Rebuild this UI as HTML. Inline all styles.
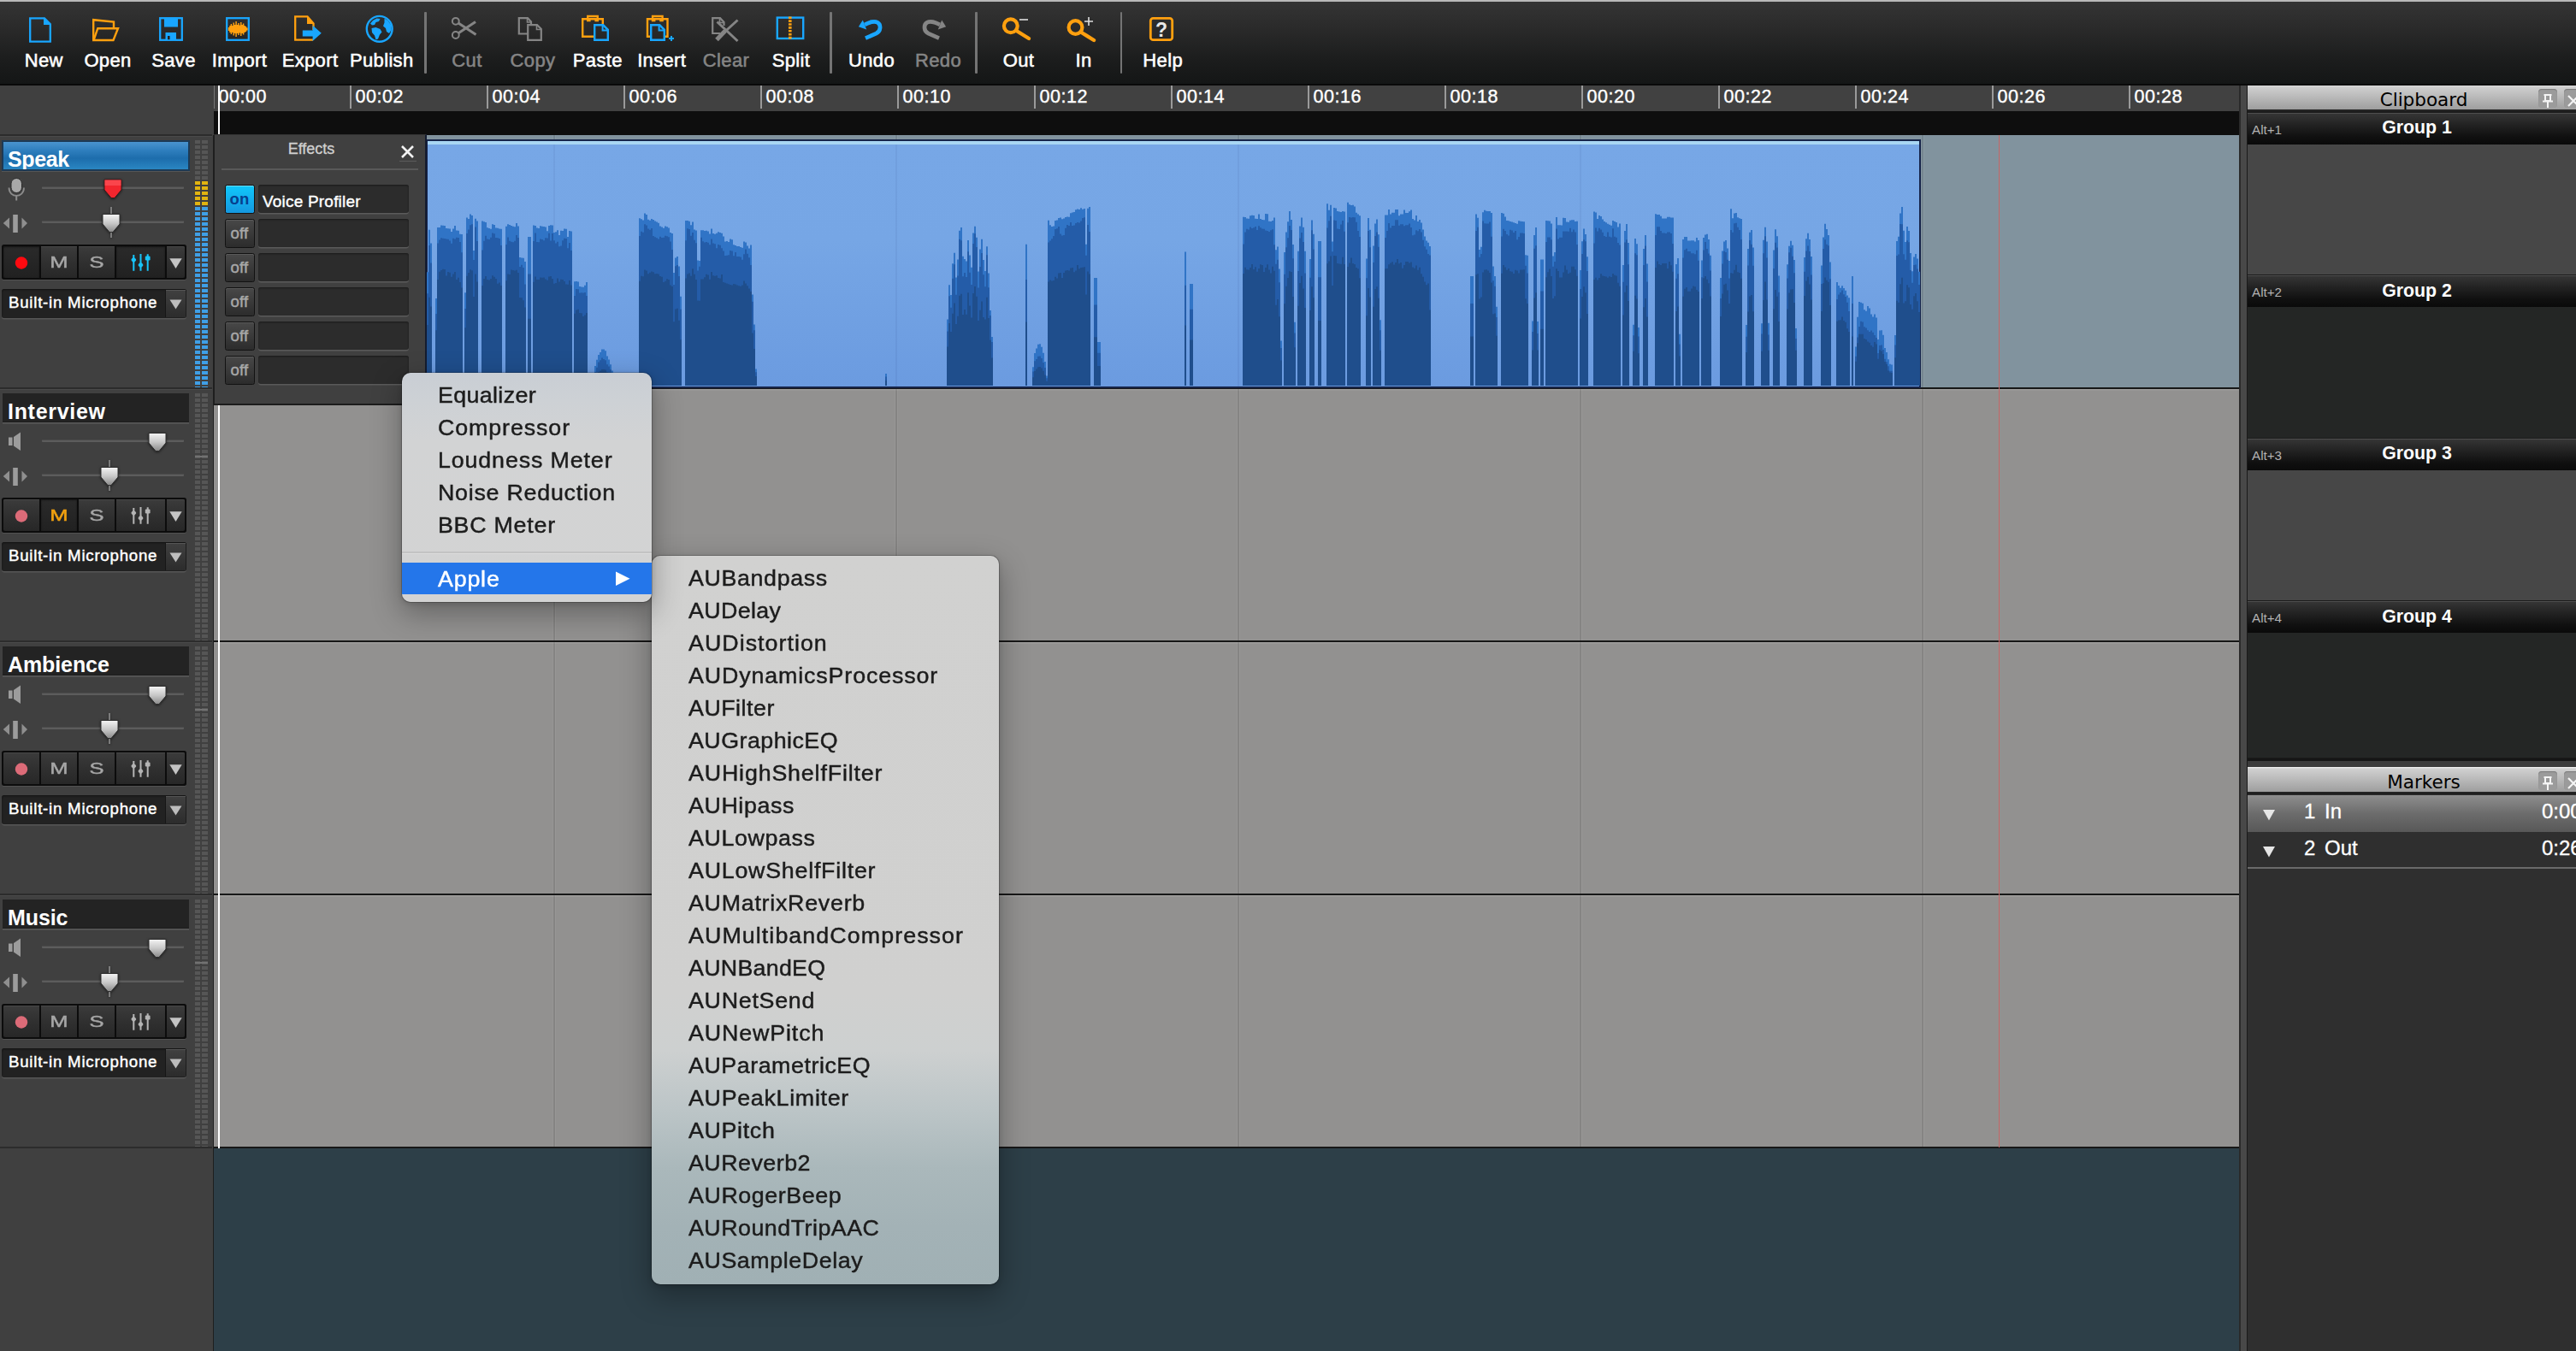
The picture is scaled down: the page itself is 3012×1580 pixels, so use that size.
<!DOCTYPE html><html><head><meta charset="utf-8"><title>Audio Editor</title><style>
*{box-sizing:border-box;margin:0;padding:0}
html,body{width:3012px;height:1580px;overflow:hidden;background:#404040}
body{position:relative;font-family:"Liberation Sans",sans-serif;color:#fff}
.abs{position:absolute}
#topstrip{left:0;top:0;width:3012px;height:2px;background:#b9b9b9}
#toolbar{left:0;top:2px;width:3012px;height:98px;background:linear-gradient(#343434 0%,#2b2b2b 30%,#1c1d1d 70%,#141616 100%);border-bottom:2px solid #090909}
.tsep{position:absolute;top:12px;width:2.2px;height:72px;background:#747474;border-radius:1px;margin-left:.4px}
.tlabel{position:absolute;top:54.5px;height:28px;line-height:28px;font-size:22px;white-space:nowrap;transform:translateX(-50%);color:#fff;-webkit-text-stroke:0.55px #fff;letter-spacing:0.35px}
.tlabel.dis{color:#858585;-webkit-text-stroke:0.55px #858585}
.ticon{position:absolute;top:14px;width:40px;height:40px;overflow:visible}
#ruler{left:250px;top:100px;width:2368px;height:30px;background:#414141}
.tick{position:absolute;top:0;width:2px;height:27px;background:#9a9a9a}
.tlab{position:absolute;top:0.3px;height:26px;line-height:26px;font-size:21.5px;color:#fff;-webkit-text-stroke:0.4px #fff;letter-spacing:0.55px}
#band{left:250px;top:130px;width:2368px;height:28px;background:#0e0e0e}
#lanes{left:250px;top:158px;width:2368px;height:1186px;background:#929190;overflow:hidden}
.lane{position:absolute;left:0;width:2368px;height:296px}
.lsep{position:absolute;left:0;width:2368px;height:2px;background:#171717;box-shadow:0 1.5px 0 rgba(255,255,255,.12)}
.grid{position:absolute;top:0;width:2px;height:1184px;background:rgba(0,0,0,.085);box-shadow:1px 0 0 rgba(255,255,255,.06),-1px 0 0 rgba(255,255,255,.04)}
#teal{left:250px;top:1343px;width:2368px;height:237px;background:#2d3f48}
#playhead{left:255px;top:100px;width:2px;height:1243px;background:#fff}
#redline{left:2336.7px;top:158px;width:1.6px;height:1184px;background:#c56767}
#leftp{left:0;top:100px;width:250px;height:1480px;background:#404040}
#lpb{left:248.6px;top:158px;width:1.8px;height:1422px;background:#1e1e1e}

.track{position:absolute;left:0;width:248px;height:296px;border-top:2px solid #2c2c2c;box-shadow:inset 0 1px 0 #4a4a4a}
.tname{position:absolute;left:3px;top:5px;width:218px;height:34px;background:#232323;border-bottom:1px solid #1c1c1c;box-shadow:0 1.5px 0 #5b5b5b;font-weight:bold;font-size:25px;line-height:42px;padding-left:6px;letter-spacing:.3px;color:#fff;overflow:hidden;white-space:nowrap}
.tname.sel{top:4.5px;height:36px;left:2px;width:220px;border:2px solid #1d3a55;background:linear-gradient(#4a94cf 0%,#2f7fbe 30%,#1d6dac 60%,#2a86c2 100%);box-shadow:0 1px 0 #555;line-height:40px;padding-left:5px}
.meter{position:absolute;left:227.5px;top:4.5px;width:15px;height:290px;
 background:
 linear-gradient(90deg,transparent 0,transparent 6px,#404040 6px,#404040 8.5px,transparent 8.5px) ,
 repeating-linear-gradient(180deg,transparent 0,transparent 4px,#404040 4px,#404040 6px),
 linear-gradient(#565656,#565656)}
.meter.live{background:
 linear-gradient(90deg,transparent 0,transparent 6px,#404040 6px,#404040 8.5px,transparent 8.5px) ,
 repeating-linear-gradient(180deg,transparent 0,transparent 4px,#404040 4px,#404040 6px),
 linear-gradient(#565656 0,#565656 48px,#e2b410 48px,#e2b410 77px,#3f9fe6 77px,#3f9fe6 100%)}
.sline{position:absolute;left:49px;width:166px;height:3px;background:#5c5c5c;border-top:1px solid #4b4b4b;border-radius:1px}
.btnrow{position:absolute;left:2px;top:127px;width:216px;height:41px;background:#0c0c0c;border-radius:2.5px;box-shadow:0 1px 0 #525252}
.btn{position:absolute;top:2px;height:37px;background:linear-gradient(#3b3b3b 0%,#303030 50%,#272727 100%);box-shadow:inset 0 1px 0 #474747}
.btn.act{background:linear-gradient(#2a2a2a,#212121);box-shadow:inset 0 1px 2px #141414}
.btn span{position:absolute;left:0;right:0;top:0;text-align:center;font-size:18.5px;line-height:38px;color:#a6a6a6;-webkit-text-stroke:.45px #a6a6a6;transform:scaleX(1.38)}
.dd{position:absolute;left:2px;top:179px;width:216px;height:34px;background:#222;border-radius:3px;box-shadow:0 1.5px 0 #565656, inset 0 1px 2px #111}
.dd b{position:absolute;left:8px;top:0;font-weight:normal;font-size:18.7px;line-height:32px;color:#fff;-webkit-text-stroke:.45px #fff;white-space:nowrap;letter-spacing:.75px}
.dd i{position:absolute;right:1px;top:1px;width:24px;height:32px;background:linear-gradient(#404040,#2c2c2c);border-left:1px solid #161616;box-shadow:inset 0 1px 0 #555}

#fx{left:250px;top:157px;width:249px;height:317px;background:#404040;border-left:1px solid #1e1e1e;border-right:2px solid #141c30;border-bottom:2px solid #1c1c1c;border-top:1px solid #333}
#fx h4{position:absolute;left:0;width:226px;top:3.8px;text-align:center;font-weight:normal;font-size:18px;line-height:24px;color:#d0d0d0;-webkit-text-stroke:.3px #d0d0d0}
#fx .hr{position:absolute;left:8px;top:39.3px;width:230px;height:2px;background:#595959}
.fxb{position:absolute;left:11.5px;width:35px;height:34px;margin-top:-1.5px;border-radius:2.5px;border:1.5px solid #121212;font-size:18.5px;font-weight:bold;line-height:31px;text-align:center;letter-spacing:.2px}
.fxb.off{background:linear-gradient(#484848,#2c2c2c);color:#a8a8a8;font-weight:normal;-webkit-text-stroke:.45px #a8a8a8;box-shadow:inset 0 1px 0 #5a5a5a}
.fxb.on{background:linear-gradient(#10c8fb,#1598e0);color:#063f8e;box-shadow:inset 0 1px 0 #6fdcff}
.fxn{position:absolute;left:51px;width:176px;height:33px;margin-top:-1.2px;background:#2c2c2c;border-radius:3px;box-shadow:0 1.5px 0 #5a5a5a, inset 0 1px 2px #1a1a1a;font-size:19px;line-height:40.5px;padding-left:5px;color:#fff;-webkit-text-stroke:.4px #fff;white-space:nowrap;letter-spacing:.2px}

#split{left:2618px;top:100px;width:10px;height:1480px;background:linear-gradient(90deg,#2a2a2a 0,#2a2a2a 2px,#484848 2px,#484848 9px,#262626 9px)}
#rp{left:2627px;top:99px;width:385px;height:1481px;background:#1b1b1b;border-left:1px solid #1a1a1a;font-family:"Liberation Sans",sans-serif}
.ptitle{position:absolute;left:0;width:384px;height:31px;background:linear-gradient(#f6f6f6 0,#d0d0d0 7%,#bcbcbc 45%,#9e9e9e 100%);border-bottom:2px solid #242424;color:#000;font-family:"DejaVu Sans","Liberation Sans",sans-serif;font-size:21.5px;line-height:35px;text-align:center;padding-left:28px;overflow:hidden}
.pbtn{position:absolute;top:5px;width:22px;height:22px;border-radius:4px;background:#9b9b9b;box-shadow:inset 0 1px 1px #7a7a7a}
.gh{position:absolute;left:0;width:384px;height:37px;background:linear-gradient(#353535 0%,#232323 35%,#101010 75%,#0a0a0a 100%);border-top:1px solid #4e4e4e}
.gh i{position:absolute;left:5px;top:9px;font-style:normal;font-size:15.2px;line-height:20px;color:#b2b2b2}
.gh b{position:absolute;left:0;width:396px;top:2.6px;text-align:center;font-size:21.3px;line-height:28px;color:#fff}
.gb{position:absolute;left:0;width:384px}
.mrow{position:absolute;left:0;width:384px;height:43px;font-size:24px;line-height:38.5px;color:#fff;-webkit-text-stroke:.3px #fff}
.mrow span{position:absolute;top:0}

.menu{position:absolute;border-radius:10px;box-shadow:0 0 0 1px rgba(0,0,0,.2),0 12px 34px 2px rgba(0,0,0,.3),0 2px 6px rgba(0,0,0,.15);overflow:hidden}
.mi{position:absolute;left:0;right:0;height:38px;line-height:38px;font-size:26px;color:#1c1c1c;white-space:nowrap}
.mi span{position:absolute;top:0;transform-origin:0 50%;transform:scaleX(1.03);-webkit-text-stroke:.45px currentColor}
.mi.hl{background:#2476ea;color:#fff}
</style></head><body><div id="lanes" class="abs"><div class="lane" style="top:0px;background:#81939e;"></div><div class="lane" style="top:296px;"></div><div class="lane" style="top:592px;"></div><div class="lane" style="top:888px;"></div><div class="grid" style="left:396.5px"></div><div class="grid" style="left:796.5px"></div><div class="grid" style="left:1196.5px"></div><div class="grid" style="left:1596.5px"></div><div class="grid" style="left:1996.5px"></div><div class="lsep" style="top:294.8px"></div><div class="lsep" style="top:590.8px"></div><div class="lsep" style="top:886.8px"></div><div class="lsep" style="top:1182.8px"></div></div><div id="teal" class="abs"></div><div class="abs" style="left:498px;top:163px;width:1748px;height:291px;background:#16244a"></div><div class="abs" style="left:500px;top:165px;width:1744px;height:287px;background:linear-gradient(#a9d6f2 0,#a9d6f2 3.5px,#77a7e6 3.5px,#76a6e5 40%,#6b9be0 100%)"></div><div class="abs" style="left:646.5px;top:169px;width:2px;height:283px;background:rgba(20,40,110,.06)"></div><div class="abs" style="left:1046.5px;top:169px;width:2px;height:283px;background:rgba(20,40,110,.06)"></div><div class="abs" style="left:1446.5px;top:169px;width:2px;height:283px;background:rgba(20,40,110,.06)"></div><div class="abs" style="left:1846.5px;top:169px;width:2px;height:283px;background:rgba(20,40,110,.06)"></div><svg class="abs" style="left:0;top:0" width="2300" height="460" viewBox="0 0 2300 460"><path d="M499 451.0V318.3H501V268.7H503V284.6H505V451H507H509V349.1H511V265.9H513V266.1H515V263.5H517V263.7H519V263.9H521V267.1H523V267.3H525V267.5H527V271H529V267.6H531V264.1H533V269.5H535V269.7H537V273.7H539V273.9H541V451H543V342.3H545V254.6H547V256.1H549V250.6H551V252.1H553V293.1H555V255.7H557V258.6H559V451H561H563V258.5H565V259.3H567V260.1H569V266.3H571V267.1H573V267.8H575V262.2H577V262.9H579V266.5H581V266.8H583V267.6H585V267.8H587V451H589H591V264.8H593V262.3H595V262.9H597V264.1H599V264.7H601V265.3H603V260.9H605V264.4H607V300.9H609V301.4H611V301.7H613V306.1H615V451H617V277H619H621V451H623V263.6H625V264H627V266.6H629V267H631V264.3H633V264.7H635V265H637V265.4H639V270.2H641V264.1H643V263.2H645V263.6H647V272.1H649V271.3H651V269.2H653V275.1H655V269.7H657V270.1H659V267.4H661V267.8H663V277H665V270.1H667V270.5H669V451H671V329.3H673V329H675V329.4H677V335H679V335.4H681V335.7H683V333.7H685V330.1H687V451H689H691H693V442.9H695V427.9H697V420.7H699V415.1H701V412H703V408.5H705H707V410.2H709V416.5H711V420.6H713V426.2H715V433.5H717V444.2H719V451H721H723H725H727H729H731H733H735H737H739H741H743H745H747V255.2H749V256.3H751V257.4H753V249.6H755V251H757V256.7H759V257.8H761V256H763V257.1H765V258.5H767V259.6H769V260.8H771V264.4H773V265.5H775V266.7H777V264.6H779V265.2H781V266.4H783V271.9H785V273.1H787V318.9H789V301.4H791V300H793V311.6H795V346.8H797V451H799H801V257.9H803H805V258.7H807V263.3H809V259.4H811V268.6H813V269.4H815V304.4H817V305H819V269.2H821V269.3H823V270.1H825V269.7H827V270.5H829V273.5H831V267.4H833V272.9H835V273.7H837V272.8H839V271.2H841V272H843V272.8H845V276.4H847V282.4H849V282.1H851V282.9H853V279.4H855V280.2H857V286.2H859V287H861V288.1H863H865V288.9H867V289.7H869V282.6H871V283.4H873V287.5H875V290.4H877V286.4H879V344.5H881V379.5H883V431.6H885V451H887H889H891H893H895H897H899H901H903H905H907H909H911H913H915H917H919H921H923H925H927H929H931H933H935H937H939H941H943H945H947H949H951H953H955H957H959H961H963H965H967H969H971H973H975H977H979H981H983H985H987H989H991H993H995H997H999H1001H1003H1005H1007H1009H1011H1013H1015H1017H1019H1021H1023H1025H1027H1029H1031H1033H1035V437H1037V451H1039H1041H1043H1045H1047H1049H1051H1053H1055H1057H1059H1061H1063H1065H1067H1069H1071H1073H1075H1077H1079H1081H1083H1085H1087H1089H1091H1093H1095H1097H1099H1101H1103H1105H1107V373.4H1109V333.2H1111V345.1H1113V308.2H1115V295.7H1117V324.4H1119V303.4H1121V269.8H1123V266H1125V299.7H1127V303.1H1129V305.6H1131V280.9H1133V298.4H1135V312.8H1137V272.6H1139V264.7H1141V277.8H1143V317.6H1145V291.4H1147V279.8H1149V304H1151V317H1153V288.3H1155V319.4H1157V362.9H1159V394H1161V451H1163H1165H1167H1169H1171H1173H1175H1177H1179H1181H1183H1185H1187H1189H1191H1193H1195H1197H1199V285.7H1201V451H1203H1205H1207V429.2H1209V413H1211V407.4H1213V402.7H1215V402.3H1217V405.7H1219V412.7H1221V423.1H1223V439.5H1225V257.8H1227V263.2H1229V265.1H1231V264.4H1233V258.1H1235V257.4H1237V255.1H1239V254.4H1241V256.2H1243V255.5H1245V254.1H1247V253.4H1249V253.7H1251V249.3H1253V248.6H1255V247.9H1257V245.3H1259V244.6H1261V245H1263V243.2H1265V244.7H1267V244H1269V285.7H1271V243.7H1273V242.1H1275V451H1277H1279V325H1281H1283V400H1285H1287V451H1289H1291H1293H1295H1297H1299H1301H1303H1305H1307H1309H1311H1313H1315H1317H1319H1321H1323H1325H1327H1329H1331H1333H1335H1337H1339H1341H1343H1345H1347H1349H1351H1353H1355H1357H1359H1361H1363H1365H1367H1369H1371H1373H1375H1377H1379H1381H1383H1385V294.6H1387V451H1389H1391V332H1393H1395V451H1397H1399H1401H1403H1405H1407H1409H1411H1413H1415H1417H1419H1421H1423H1425H1427H1429H1431H1433H1435H1437H1439H1441H1443H1445H1447H1449H1451H1453V253.7H1455V254H1457V255.4H1459V255.7H1461V252.3H1463V251.8H1465V252.1H1467V255.8H1469V256H1471V250.4H1473V255.9H1475V257H1477V257.3H1479V249.9H1481V250.2H1483V258.8H1485V259.1H1487V258.1H1489V254.4H1491V292.3H1493V288.6H1495V314.5H1497V398.4H1499V451H1501V294.9H1503V271.5H1505V259.2H1507V247.1H1509V257H1511V285.9H1513V376.7H1515V451H1517V293.7H1519V264.6H1521V254.4H1523V265.7H1525V293.7H1527V451H1529H1531V303.1H1533V257.4H1535V273.8H1537V451H1539H1541V282H1543H1545V451H1547H1549H1551V238.2H1553V245.8H1555V239.8H1557V282.5H1559V242.9H1561V243.4H1563V247.1H1565V247.6H1567V248.1H1569V247H1571V247.5H1573V451H1575V236.8H1577V239.3H1579V240H1581V239.8H1583V241.5H1585V248.8H1587V250.5H1589V252.2H1591V451H1593H1595H1597V302.4H1599V255H1601V268.7H1603V451H1605V287.4H1607V261.5H1609V256.6H1611V274.3H1613V374.2H1615V451H1617H1619V251.4H1621H1623V244.9H1625V250.6H1627V248.8H1629H1631V245.1H1633H1635V252.3H1637V250.6H1639H1641V245.4H1643V249H1645H1647V247.2H1649V245.6H1651V256H1653V257.6H1655V251.9H1657V259.1H1659V256.9H1661V260.6H1663V268.5H1665V276.6H1667V281.4H1669V283.7H1671V287.9H1673V451H1675H1677H1679H1681H1683H1685H1687H1689H1691H1693H1695H1697H1699H1701H1703H1705H1707H1709H1711H1713H1715H1717H1719V323H1721H1723V451H1725V250.4H1727V254.8H1729V291.9H1731V288.8H1733V248.3H1735V245.7H1737V246.7H1739V246.9H1741V247H1743V249.1H1745V311.5H1747V323H1749V358.8H1751V451H1753H1755V249.1H1757V249.8H1759V253.6H1761V258H1763V258.3H1765V258.9H1767V259.6H1769V260.3H1771V260.9H1773V261.8H1775V258.2H1777V258.8H1779V258.9H1781V259.3H1783V298.2H1785V298.7H1787V451H1789H1791V375.6H1793V275.1H1795V266.1H1797V376H1799V451H1801V303.6H1803H1805V451H1807V257.9H1809V258.3H1811V258.5H1813V261.4H1815V299.5H1817V295.1H1819V253.9H1821V263.2H1823V263.3H1825V263.5H1827V254.7H1829V254.9H1831V259.6H1833V259.8H1835V257.7H1837V257.2H1839V257.3H1841V259.1H1843V258.8H1845V451H1847V316H1849V282.2H1851V267.4H1853V274H1855V300.2H1857V451H1859H1861H1863V247.5H1865V248.5H1867V256.1H1869V251.9H1871V252.9H1873V256.4H1875V259.1H1877V260.2H1879V261.8H1881V262.8H1883V263.8H1885V258H1887V259H1889V260.1H1891V265.4H1893V261.5H1895V451H1897V310.1H1899V270.1H1901V262H1903V284.1H1905V451H1907H1909V379.8H1911V278.9H1913V285.3H1915V383H1917V451H1919H1921V291.1H1923V275H1925V308.6H1927V451H1929H1931H1933H1935V250.3H1937V251.1H1939H1941V252.7H1943V255.4H1945H1947H1949V253.7H1951H1953V254.4H1955H1957V451H1959V309.1H1961V302.1H1963V390.7H1965V451H1967V279.9H1969V277H1971H1973V281.4H1975H1977V281.2H1979H1981V282.4H1983V278.1H1985V280.9H1987V451H1989V304.4H1991V277.9H1993V274.4H1995V273.7H1997V279.9H1999V298.7H2001V451H2003H2005H2007H2009H2011V325H2013V293.4H2015V282.4H2017V280.9H2019V290.6H2021V304.9H2023V244.3H2025V255.3H2027V249.4H2029V248.9H2031V254.3H2033V255.2H2035V256.1H2037V451H2039H2041V380H2043V290.9H2045V271.8H2047V269H2049V289.5H2051V451H2053H2055H2057H2059V378.2H2061V280.8H2063V265.7H2065V282.4H2067V377.7H2069V451H2071H2073V292.5H2075V268.3H2077V276.2H2079V322.4H2081V451H2083H2085H2087H2089V309.2H2091V287.7H2093V281.8H2095V286.7H2097V304.1H2099V384H2101V451H2103H2105H2107H2109V301.1H2111V279.3H2113V272.8H2115V280H2117V300H2119V451H2121H2123H2125H2127H2129V310.6H2131V277.6H2133V261.8H2135V268H2137V275H2139V306.6H2141V451H2143H2145H2147V330.1H2149V334H2151V336.7H2153V334.2H2155V337H2157V339.8H2159V345.4H2161V348.2H2163V451H2165V323H2167V451H2169V405.5H2171V370.8H2173V353.1H2175V353.8H2177V354.8H2179V362.3H2181V363.8H2183V358.1H2185V360.5H2187V367.5H2189V370.5H2191V367.6H2193V371.5H2195V397.1H2197V386.6H2199V386.2H2201V391.7H2203V407.1H2205V412H2207V420.2H2209V425.7H2211V426.6H2213V451H2215V392H2217V282.1H2219V276.7H2221V249.5H2223V241.9H2225V269.7H2227V283H2229V265.1H2231V269.9H2233V295.9H2235V317.3H2237V300.5H2239V297.1H2241V302.5H2243V317.8H2245V451.0Z" fill="#3074c6"/><path d="M499 451.0V343.2H501V287.1H503V307.4H505V451H507H509V366.9H511V284.4H513V280.5H515V278.2H517V278.7H519V278.9H521V279.6H523V279.8H525V281.6H527V284.8H529V278.8H531V279.4H533V277.8H535V278H537V282.9H539V295.2H541V451H543V360.9H545V273H547V268.5H549V263.3H551V262.2H553V304.1H555V265.4H557V282.1H559V451H561H563V292.5H565V281.8H567V275.7H569V279.4H571V280.1H573V277.8H575V272.4H577V273.2H579V278H581V278.3H583V279H585V287.1H587V451H589H591V285.9H593V277.5H595V281.7H597V282.7H599V283.3H601V281.7H603V274.9H605V278.1H607V311.9H609V309.8H611V313H613V332.4H615V451H617V320.5H619H621V451H623V282.1H625V272.5H627V282.9H629V283.2H631V279.5H633V279.9H635V281.3H637V278.2H639V278.5H641V272.7H643V281.4H645V273.1H647V281.2H649V284.6H651V282.8H653V288.2H655V287.6H657V281.2H659V278.7H661V279.1H663V290.2H665V283.9H667V293.1H669V451H671V345.9H673V337.9H675V338.3H677V342.5H679V342.2H681V342.5H683V342H685V346.1H687V451H689H691H693V445.3H695V434.9H697V429.8H699V423.6H701V421.2H703V418.5H705V420.1H707V421.3H709V426.2H711V428.5H713V432.2H715V438.6H717V446.2H719V451H721H723H725H727H729H731H733H735H737H739H741H743H745H747V276H749V270.8H751V271.8H753V262.3H755V263.6H757V267.6H759V268.7H761V266.9H763V275.9H765V277.2H767V278.2H769V279.6H771V276.8H773V277.9H775V277.7H777V275.7H779V276.3H781V277.3H783V282.5H785V292H787V333H789V311.3H791V310H793V323H795V361.7H797V451H799H801V281.2H803V267.3H805V268H807V275.7H809V272.1H811V280.8H813V284.3H815V316.4H817V311.8H819V277.8H821V282.3H823V283.4H825V283H827V283.8H829V286.3H831V279.5H833V284.6H835V285.3H837V290.3H839V286.1H841V286.8H843V290.2H845V293.5H847V298.9H849V298.7H851V298.2H853V292.9H855V293.6H857V299.2H859V294.9H861V299.9H863H865V300.6H867V303.7H869V297.2H871V291.4H873V296.8H875V301.3H877V310.1H879V352.8H881V386.2H883V435.2H885V451H887H889H891H893H895H897H899H901H903H905H907H909H911H913H915H917H919H921H923H925H927H929H931H933H935H937H939H941H943H945H947H949H951H953H955H957H959H961H963H965H967H969H971H973H975H977H979H981H983H985H987H989H991H993H995H997H999H1001H1003H1005H1007H1009H1011H1013H1015H1017H1019H1021H1023H1025H1027H1029H1031H1033H1035V440.5H1037V451H1039H1041H1043H1045H1047H1049H1051H1053H1055H1057H1059H1061H1063H1065H1067H1069H1071H1073H1075H1077H1079H1081H1083H1085H1087H1089H1091H1093H1095H1097H1099H1101H1103H1105H1107V387.6H1109V346.3H1111V359.8H1113V325.8H1115V309.2H1117V344.7H1119V322.6H1121V279.7H1123V281.3H1125V323.3H1127V319H1129V324.1H1131V294.2H1133V318.8H1135V333H1137V285.1H1139V273.3H1141V289.1H1143V336.4H1145V312.1H1147V295.9H1149V321.2H1151V335.2H1153V298.2H1155V336.2H1157V369.1H1159V400.1H1161V451H1163H1165H1167H1169H1171H1173H1175H1177H1179H1181H1183H1185H1187H1189H1191H1193H1195H1197H1199V327H1201V451H1203H1205H1207V434.5H1209V422.3H1211V420H1213V416.7H1215V416.6H1217V418.9H1219V423.9H1221V430H1223V442.3H1225V283.6H1227V281.5H1229V279.3H1231V275.9H1233V267.9H1235V267.2H1237V265H1239V273.6H1241V275.5H1243V274.9H1245V266.8H1247V263H1249V264.1H1251V259.9H1253V264H1255V263.4H1257V261H1259V260H1261V260.4H1263V258.6H1265V255H1267V254.3H1269V298.7H1271V263H1273V271.1H1275V451H1277H1279V356.5H1281H1283V412.8H1285H1287V451H1289H1291H1293H1295H1297H1299H1301H1303H1305H1307H1309H1311H1313H1315H1317H1319H1321H1323H1325H1327H1329H1331H1333H1335H1337H1339H1341H1343H1345H1347H1349H1351H1353H1355H1357H1359H1361H1363H1365H1367H1369H1371H1373H1375H1377H1379H1381H1383H1385V333.7H1387V451H1389H1391V361.8H1393H1395V451H1397H1399H1401H1403H1405H1407H1409H1411H1413H1415H1417H1419H1421H1423H1425H1427H1429H1431H1433H1435H1437H1439H1441H1443H1445H1447H1449H1451H1453V285.5H1455V271.4H1457V267.8H1459V268.5H1461V265.4H1463V267H1465V266.3H1467V265.1H1469V268.9H1471V264.2H1473V266.2H1475V267.4H1477V267.7H1479V269.6H1481V269.9H1483V271.1H1485V269.2H1487V268.3H1489V286.2H1491V308.7H1493V303.8H1495V330.2H1497V406.9H1499V451H1501V320.7H1503V289.3H1505V278.2H1507V263.9H1509V269H1511V302.3H1513V389.5H1515V451H1517V317H1519V278.4H1521V272H1523V283H1525V319.4H1527V451H1529H1531V324.7H1533V269.2H1535V291.4H1537V451H1539H1541V324.2H1543H1545V451H1547H1549H1551V266.4H1553V258.3H1555V252.7H1557V294.3H1559V257.5H1561V258H1563V267.4H1565V267.9H1567V262.4H1569V257.9H1571V270.7H1573V451H1575V260.3H1577V254H1579V254.6H1581V254H1583V254.2H1585V259.8H1587V270.1H1589V277H1591V451H1593H1595H1597V325.3H1599V270.1H1601V289.2H1603V451H1605V307H1607V275.9H1609V271.4H1611V288.7H1613V386.2H1615V451H1617H1619V278.1H1621V270.1H1623V261.1H1625V266.4H1627V263.9H1629H1631V257.3H1633H1635V263.8H1637V262.2H1639H1641V264.3H1643V263.3H1645H1647V261.6H1649V266H1651V275.3H1653V274.5H1655V269.2H1657V270.3H1659V268.1H1661V271.6H1663V280.7H1665V288.3H1667V291.7H1669V297H1671V298.4H1673V451H1675H1677H1679H1681H1683H1685H1687H1689H1691H1693H1695H1697H1699H1701H1703H1705H1707H1709H1711H1713H1715H1717H1719V355H1721H1723V451H1725V269.9H1727V265.7H1729V300.7H1731V297H1733V258.6H1735V261.2H1737V261.4H1739V261.5H1741V259.4H1743V276.7H1745V328.3H1747V334.7H1749V370.9H1751V451H1753H1755V276.5H1757V267.7H1759V269.9H1761V274H1763V275.5H1765V268.8H1767V269.5H1769V272H1771V269.9H1773V280.3H1775V277H1777V272.5H1779H1781V272.9H1783V310.7H1785V319.6H1787V451H1789H1791V388H1793V290.7H1795V287.3H1797V390H1799V451H1801V340.5H1803H1805V451H1807V283.1H1809V277.4H1811V277.6H1813V280.2H1815V311.7H1817V305.9H1819V267.5H1821V279.6H1823V277.7H1825V277.8H1827V270.5H1829V270.6H1831H1833V270.7H1835V266.8H1837V271.2H1839V268.5H1841V271.6H1843V285.9H1845V451H1847V337.9H1849V297.1H1851V280.3H1853V282.2H1855V317H1857V451H1859H1861H1863V284.5H1865V266.6H1867V270.6H1869V266.7H1871V268.6H1873V271.8H1875V275.9H1877V276.9H1879V271.5H1881V276.7H1883V277.6H1885V267.3H1887V276.8H1889V277.7H1891V283.9H1893V286.4H1895V451H1897V329.7H1899V283.4H1901V280.2H1903V309.3H1905V451H1907H1909V392.3H1911V296.2H1913V298.3H1915V393.5H1917V451H1919H1921V309.9H1923V287.6H1925V329.4H1927V451H1929H1931H1933H1935V275.1H1937V265.3H1939H1941V270H1943V272.4H1945H1947V272.9H1949V271.4H1951H1953V273H1955V285.1H1957V451H1959V325.8H1961V320.2H1963V402.4H1965V451H1967V301.5H1969V292.2H1971V290.7H1973V294.1H1975H1977V296.2H1979H1981V297.3H1983V292.8H1985V304.7H1987V451H1989V324.2H1991V292.4H1993V283H1995V290.9H1997V296.5H1999V316.4H2001V451H2003H2005H2007H2009H2011V348.9H2013V308.4H2015V293.7H2017V294.9H2019V303.8H2021V325.5H2023V269H2025V271.8H2027V261.2H2029V260.7H2031V265.8H2033V269.1H2035V279.9H2037V451H2039H2041V393.8H2043V310.4H2045V280.9H2047V285.7H2049V310.7H2051V451H2053H2055H2057H2059V390.4H2061V296.3H2063V276.3H2065V301.6H2067V391.4H2069V451H2071H2073V313.9H2075V283.7H2077V289.4H2079V341.7H2081V451H2083H2085H2087H2089V325.5H2091V295.3H2093V289.7H2095V299.7H2097V319.3H2099V395.9H2101V451H2103H2105H2107H2109V317.7H2111V293.4H2113V287.5H2115V294H2117V321.4H2119V451H2121H2123H2125H2127H2129V331.9H2131V290.9H2133V280.2H2135V285.8H2137V287.2H2139V326.2H2141V451H2143H2145H2147V350H2149V344.6H2151V341.9H2153V339.6H2155V344.3H2157V346.9H2159V353.7H2161V363.9H2163V451H2165V355H2167V451H2169V416.8H2171V394.4H2173V382H2175V375.8H2177V376.5H2179V382.3H2181V383.4H2183V386.3H2185V388H2187V386.5H2189V388.7H2191V392.1H2193V394.9H2195V413H2197V403.9H2199V403.6H2201V408.9H2203V419.8H2205V423.3H2207V428.2H2209V433.8H2211H2213V451H2215V403.6H2217V299H2219V297.4H2221V262.1H2223V262.2H2225V297.2H2227V303.7H2229V281.2H2231V283.3H2233V316H2235V330.8H2237V309.9H2239V309.6H2241V314.6H2243V332.9H2245V451.0Z" fill="#245ca8"/><path d="M499 451.0V380H501V347.8H503V358.4H505V451H507H509V386.3H511V327.1H513V317.8H515V316H517V314.8H519V315H521V322.4H523V318H525V318.7H527V323.7H529V320.4H531V317.9H533V327.1H535V324.7H537V330H539V336.6H541V451H543V383.2H545V322.7H547V319.1H549V315.2H551V316.3H553V347H555V320.6H557V329.4H559V451H561H563V334H565V325.9H567V323H569V327H571V327.5H573V326.1H575V322.3H577V323.7H579V326.1H581V331.7H583V330.6H585V334.1H587V451H589H591V328.2H593V320.6H595V321.1H597V315.6H599V316H601V316.5H603V315.8H605V319H607V347.9H609V348.2H611V351.2H613V359.5H615V451H617V372.7H619H621V451H623V329.7H625V323.5H627V326.9H629V327.1H631V324.5H633V324.8H635V324.4H637V326.4H639V327.7H641V323.5H643V322.9H645V326H647V331.7H649V331.1H651V325.4H653V329.5H655V326.7H657V327H659V329.1H661V332.4H663V332.7H665V328.1H667V333.5H669V451H671V366.8H673V362.6H675V361.8H677V365.9H679V366.2H681V370H683V368.6H685V366.1H687V451H689H691H693V447.4H695V440.6H697V437.4H699V434.9H701V433.5H703V431.9H705H707V432.6H709V435.5H711V437.3H713V439.8H715V443.1H717V448H719V451H721H723H725H727H729H731H733H735H737H739H741H743H745H747V328.8H749V322.7H751V323.3H753V315.5H755V316.5H757V320.3H759V318.8H761V317.5H763V318.3H765V320.2H767V319.9H769V320.5H771V323H773V323.7H775V330.1H777V328.7H779V326.3H781V327.1H783V333.4H785V335H787V376.2H789V361.6H791V360.7H793V374.8H795V397.2H797V451H799H801V325.5H803V320.4H805V319.6H807V322.7H809V314.3H811V320.8H813V327.1H815V351.4H817V351.8H819V326.4H821H823V324.2H825V320.8H827V321.4H829V326.7H831V318.1H833V322.3H835V322.8H837V322.2H839V325.1H841V325.6H843V321.1H845V330.1H847V330.8H849V331.6H851V332.2H853V332.9H855V333.4H857V332H859V332.6H861V333.4H863V334.2H865V334.7H867V333.6H869V328.5H871V331.4H873V334.3H875V337.5H877V341.1H879V389.4H881V408.1H883V439.9H885V451H887H889H891H893H895H897H899H901H903H905H907H909H911H913H915H917H919H921H923H925H927H929H931H933H935H937H939H941H943H945H947H949H951H953H955H957H959H961H963H965H967H969H971H973H975H977H979H981H983H985H987H989H991H993H995H997H999H1001H1003H1005H1007H1009H1011H1013H1015H1017H1019H1021H1023H1025H1027H1029H1031H1033H1035V444.7H1037V451H1039H1041H1043H1045H1047H1049H1051H1053H1055H1057H1059H1061H1063H1065H1067H1069H1071H1073H1075H1077H1079H1081H1083H1085H1087H1089H1091H1093H1095H1097H1099H1101H1103H1105H1107V405.5H1109V377.9H1111V388H1113V366.8H1115V354.5H1117V378.9H1119V369.8H1121V345.7H1123V343.8H1125V368.1H1127V362.1H1129V367.7H1131V342.3H1133V357.5H1135V371.4H1137V342.9H1139V335H1141V346.7H1143V375.1H1145V362.8H1147V352.5H1149V370.9H1151V373.5H1153V347.8H1155V372H1157V397.8H1159V418.5H1161V451H1163H1165H1167H1169H1171H1173H1175H1177H1179H1181H1183H1185H1187H1189H1191H1193H1195H1197H1199V376.6H1201V451H1203H1205H1207V441.2H1209V433.9H1211V431.4H1213V429.3H1215V429.1H1217V430.6H1219V433.8H1221V438.5H1223V445.8H1225V329.5H1227V327.6H1229V328.4H1231V328H1233V323.8H1235V325.6H1237V319.6H1239V319.1H1241V324.9H1243V319H1245V316.5H1247V316H1249V316.5H1251V313.5H1253V313H1255V318.2H1257V316.5H1259V309.9H1261V314.2H1263V313H1265V312.7H1267V312.2H1269V344.5H1271V317.5H1273V320.6H1275V451H1277H1279V394.3H1281H1283V428.1H1285H1287V451H1289H1291H1293H1295H1297H1299H1301H1303H1305H1307H1309H1311H1313H1315H1317H1319H1321H1323H1325H1327H1329H1331H1333H1335H1337H1339H1341H1343H1345H1347H1349H1351H1353H1355H1357H1359H1361H1363H1365H1367H1369H1371H1373H1375H1377H1379H1381H1383H1385V380.6H1387V451H1389H1391V397.4H1393H1395V451H1397H1399H1401H1403H1405H1407H1409H1411H1413H1415H1417H1419H1421H1423H1425H1427H1429H1431H1433H1435H1437H1439H1441H1443H1445H1447H1449H1451H1453V320.1H1455V312.8H1457V315.3H1459V315.5H1461V313.1H1463V308.9H1465V315H1467V312.2H1469V317.8H1471V313.9H1473V309.3H1475V310.1H1477V318H1479V312.9H1481V309.3H1483V315.4H1485V319.6H1487V311.7H1489V316.7H1491V356.8H1493V350H1495V370.2H1497V421.6H1499V451H1501V355.3H1503V334.7H1505V325.1H1507V317.2H1509V318H1511V347.1H1513V406.3H1515V451H1517V357.7H1519V331.1H1521V322.8H1523V337.6H1525V359.9H1527V451H1529H1531V363H1533V335.3H1535V348.3H1537V451H1539H1541V374.9H1543H1545V451H1547H1549H1551V308.2H1553V305.4H1555V299.6H1557V334H1559V298.9H1561V299.2H1563V308.1H1565V308.5H1567V308.8H1569V300.7H1571V309H1573V451H1575V312H1577V307.5H1579V301.4H1581V307.9H1583V309.1H1585V313.1H1587V314.3H1589V325.3H1591V451H1593H1595H1597V369.2H1599V336.9H1601V347.5H1603V451H1605V358.8H1607V338.1H1609V335.2H1611V348.8H1613V409.8H1615V451H1617H1619V314.3H1621V313.9H1623V309.3H1625V307.6H1627V306.3H1629V309.6H1631V307H1633V303.1H1635V308.3H1637V307H1639V313.7H1641V310.1H1643V306H1645H1647V307.5H1649V306.4H1651V312.5H1653V313.7H1655V310.5H1657V315.7H1659V312.7H1661V320.3H1663V323.7H1665V329.4H1667V333.2H1669V331.5H1671V362.5H1673V451H1675H1677H1679H1681H1683H1685H1687H1689H1691H1693H1695H1697H1699H1701H1703H1705H1707H1709H1711H1713H1715H1717H1719V393.4H1721H1723V451H1725V321.2H1727V320.2H1729V349.5H1731V347.5H1733V318.6H1735V315.6H1737V315.2H1739V316.4H1741V319H1743V330.5H1745V367.3H1747V366.6H1749V392.7H1751V451H1753H1755V319.7H1757V309.9H1759V312.5H1761V315.7H1763V314H1765V317.2H1767V317.7H1769V319.9H1771V315.7H1773V316.4H1775V319.6H1777V315.4H1779H1781V315.3H1783V349.3H1785V355.1H1787V451H1789H1791V409.5H1793V348.6H1795V342.2H1797V409.4H1799V451H1801V384.7H1803H1805V451H1807V324.3H1809V318.2H1811V314.4H1813V323H1815V349.1H1817V346.2H1819V314.3H1821V317H1823V324.4H1825V324.5H1827V318.6H1829V310.6H1831V315.4H1833V320.1H1835V318.7H1837V311.7H1839V311.8H1841V315.2H1843V322.8H1845V451H1847V372.5H1849V347.1H1851V335.2H1853V342.2H1855V367H1857V451H1859H1861H1863V327.1H1865V324.8H1867V327.6H1869V324.9H1871V320.3H1873V322.6H1875V322.9H1877V323.6H1879V324.7H1881V323.3H1883V323.9H1885V320H1887V321.8H1889V322.5H1891V330.7H1893V334.8H1895V451H1897V368.6H1899V341.8H1901V334.1H1903V351.9H1905V451H1907H1909V410.8H1911V345.8H1913V349.5H1915V413.3H1917V451H1919H1921V359.2H1923V348.9H1925V370.4H1927V451H1929H1931H1933H1935V312.9H1937V305.6H1939V308.9H1941V310H1943V308H1945H1947H1949V314.1H1951V306H1953V310.2H1955V317.7H1957V451H1959V364.1H1961V358.6H1963V416.5H1965V451H1967V346.7H1969V337.7H1971V336.1H1973V340.7H1975H1977V337.6H1979V334.4H1981V335.2H1983V338.9H1985V340.9H1987V451H1989V349.1H1991V325.3H1993V322.9H1995V326.8H1997V331.2H1999V346.4H2001V451H2003H2005H2007H2009H2011V369.9H2013V343.6H2015V332.8H2017V331.7H2019V339.5H2021V354.9H2023V319.3H2025V319.7H2027V315.8H2029V309.8H2031V318.3H2033V318.9H2035V325.8H2037V451H2039H2041V411.9H2043V364.4H2045V346.5H2047V344.9H2049V364.3H2051V451H2053H2055H2057H2059V410.7H2061V351.1H2063V329.4H2065V350.5H2067V409.7H2069V451H2071H2073V361.2H2075V339.1H2077V346.8H2079V375.9H2081V451H2083H2085H2087H2089V361.6H2091V342.5H2093V338.6H2095V338.2H2097V353.9H2099V409.8H2101V451H2103H2105H2107H2109V345.9H2111V328.4H2113V323.8H2115V332.6H2117V350.6H2119V451H2121H2123H2125H2127H2129V363.9H2131V331.2H2133V324.5H2135V327.8H2137V329.8H2139V356.9H2141V451H2143H2145H2147V375.8H2149V374.4H2151V374.3H2153V370.4H2155V374.9H2157V376.8H2159V384.2H2161V388H2163V451H2165V393.4H2167V451H2169V422.8H2171V401.2H2173V390.7H2175V390.8H2177V390.7H2179V396.1H2181V397H2183V399.5H2185V400.8H2187V404.1H2189V405.8H2191V400H2193V402.4H2195V419.7H2197V409.2H2199V410.6H2201V414H2203V423H2205V426.1H2207V433.4H2209V435.5H2211V436.1H2213V451H2215V418.2H2217V351.7H2219V353.7H2221V332.2H2223V324.8H2225V354.4H2227V352.3H2229V333.3H2231V336.3H2233V356H2235V361.7H2237V346.2H2239V342.9H2241V352.3H2243V364.9H2245V451.0Z" fill="#1f4e8c"/></svg><div id="redline" class="abs"></div><div id="ruler" class="abs"><div class="tick" style="left:0;width:1px;background:#777"></div><div class="tlab" style="left:5.5px">00:00</div><div class="tick" style="left:159px"></div><div class="tlab" style="left:165.5px">00:02</div><div class="tick" style="left:319px"></div><div class="tlab" style="left:325.5px">00:04</div><div class="tick" style="left:479px"></div><div class="tlab" style="left:485.5px">00:06</div><div class="tick" style="left:639px"></div><div class="tlab" style="left:645.5px">00:08</div><div class="tick" style="left:799px"></div><div class="tlab" style="left:805.5px">00:10</div><div class="tick" style="left:959px"></div><div class="tlab" style="left:965.5px">00:12</div><div class="tick" style="left:1119px"></div><div class="tlab" style="left:1125.5px">00:14</div><div class="tick" style="left:1279px"></div><div class="tlab" style="left:1285.5px">00:16</div><div class="tick" style="left:1439px"></div><div class="tlab" style="left:1445.5px">00:18</div><div class="tick" style="left:1599px"></div><div class="tlab" style="left:1605.5px">00:20</div><div class="tick" style="left:1759px"></div><div class="tlab" style="left:1765.5px">00:22</div><div class="tick" style="left:1919px"></div><div class="tlab" style="left:1925.5px">00:24</div><div class="tick" style="left:2079px"></div><div class="tlab" style="left:2085.5px">00:26</div><div class="tick" style="left:2239px"></div><div class="tlab" style="left:2245.5px">00:28</div></div><div id="band" class="abs"></div><div id="leftp" class="abs"><div class="track" style="top:57.2px"><div class="tname sel" style="letter-spacing:-0.4px">Speak</div><div class="meter live"></div><svg class="abs" style="left:6px;top:46px" width="28" height="32" viewBox="6 46 28 32"><rect x="13" y="49.5" width="12.5" height="17" rx="6.2" fill="#a8a8a8" stroke="#2a2a2a" stroke-width="1"/><path d="M10.5 60.5C10.5 73 28 73 28 60.5" fill="none" stroke="#8c8c8c" stroke-width="1.8"/><path d="M19.2 70V75.5" stroke="#8c8c8c" stroke-width="2"/></svg><svg class="abs" style="left:2px;top:88px" width="34" height="28" viewBox="2 88 34 28"><path d="M11 95.5V108.5L3.8 102ZM25.5 95.5V108.5L32 102Z" fill="#8f8f8f"/><rect x="15.2" y="92" width="5.6" height="21" fill="#9c9c9c"/></svg><div class="sline" style="top:59px"></div><div class="sline" style="top:99px"></div><svg class="abs" style="left:118px;top:41px;filter:drop-shadow(0 1.5px 1.5px rgba(0,0,0,.55))" width="28" height="40" viewBox="-14 -20 28 40"><path d="M-10 -10H10V2L2 11.5H-2L-10 2Z" fill="#f2262e" stroke="#3a1a1a" stroke-width="1"/><path d="M-9.5 -9.5H9.5V-3H-9.5Z" fill="#ff5a60" opacity=".6"/></svg><svg class="abs" style="left:116px;top:81px;filter:drop-shadow(0 1.5px 1.5px rgba(0,0,0,.55))" width="28" height="40" viewBox="-14 -20 28 40"><path d="M0 -18V-10M0 10V18" stroke="#9a9a9a" stroke-width="1.4"/><defs><linearGradient id="tg" x1="0" y1="0" x2="0" y2="1"><stop offset="0" stop-color="#f4f4f4"/><stop offset=".5" stop-color="#c8c8c8"/><stop offset="1" stop-color="#8a8a8a"/></linearGradient></defs><path d="M-10 -9.5H10V2L2 11.5H-2L-10 2Z" fill="url(#tg)" stroke="#2e2e2e" stroke-width="1"/></svg><div class="btnrow"><div class="btn act" style="left:2px;width:42px;border-radius:2px 0 0 2px"><svg class="abs" style="left:0;top:0" width="42" height="37"><circle cx="21" cy="19.5" r="7.2" fill="#ff0a10"/></svg></div><div class="btn" style="left:46px;width:42px"><span style="">M</span></div><div class="btn" style="left:90px;width:42px"><span>S</span></div><div class="btn act" style="left:134px;width:57px"><svg class="abs" style="left:0;top:0" width="57" height="37" viewBox="-28.5 -18.5 57 37"><g stroke="#18c4f8" stroke-width="2" fill="#18c4f8"><path d="M-8.2 -8.6V10.2M0 -9.6V10.2M8.2 -9.2V10.2"/><g stroke="none"><path d="M-8.2 -6.2L-5.2 -2.6L-8.2 1L-11.2 -2.6Z"/><rect x="-10.6" y="-4.2" width="4.8" height="3.2" rx="1"/><path d="M0 -0.2L3.1 3.4L0 7L-3.1 3.4Z"/><rect x="-2.5" y="1.8" width="5" height="3.2" rx="1"/><rect x="5.3" y="-7" width="5.8" height="5" rx="1.2"/></g></g></svg></div><div class="btn" style="left:193px;width:21px;border-radius:0 2px 2px 0"><svg class="abs" style="left:0;top:0" width="21" height="37"><path d="M3.3 14.2H17.7L10.5 26Z" fill="#c4c4c4"/></svg></div></div><div class="dd"><b>Built-in Microphone</b><i><svg width="23" height="32"><path d="M4.5 11.5H18.5L11.5 22.5Z" fill="#bdbdbd"/></svg></i></div></div><div class="track" style="top:353.2px"><div class="tname" style="letter-spacing:0.7px">Interview</div><div class="meter"></div><div class="abs" style="left:227.5px;top:78px;width:15px;height:2px;background:#727272"></div><svg class="abs" style="left:6px;top:46px" width="28" height="32" viewBox="6 46 28 32"><path d="M10 56.5H14.5V66H10ZM16 56L24 50.5V72L16 66.5Z" fill="#9c9c9c"/></svg><svg class="abs" style="left:2px;top:88px" width="34" height="28" viewBox="2 88 34 28"><path d="M11 95.5V108.5L3.8 102ZM25.5 95.5V108.5L32 102Z" fill="#8f8f8f"/><rect x="15.2" y="92" width="5.6" height="21" fill="#9c9c9c"/></svg><div class="sline" style="top:59px"></div><div class="sline" style="top:99px"></div><svg class="abs" style="left:170px;top:41px;filter:drop-shadow(0 1.5px 1.5px rgba(0,0,0,.55))" width="28" height="40" viewBox="-14 -20 28 40"><defs><linearGradient id="tg" x1="0" y1="0" x2="0" y2="1"><stop offset="0" stop-color="#f4f4f4"/><stop offset=".5" stop-color="#c8c8c8"/><stop offset="1" stop-color="#8a8a8a"/></linearGradient></defs><path d="M-10 -9.5H10V2L2 11.5H-2L-10 2Z" fill="url(#tg)" stroke="#2e2e2e" stroke-width="1"/></svg><svg class="abs" style="left:114px;top:81px;filter:drop-shadow(0 1.5px 1.5px rgba(0,0,0,.55))" width="28" height="40" viewBox="-14 -20 28 40"><path d="M0 -18V-10M0 10V18" stroke="#9a9a9a" stroke-width="1.4"/><defs><linearGradient id="tg" x1="0" y1="0" x2="0" y2="1"><stop offset="0" stop-color="#f4f4f4"/><stop offset=".5" stop-color="#c8c8c8"/><stop offset="1" stop-color="#8a8a8a"/></linearGradient></defs><path d="M-10 -9.5H10V2L2 11.5H-2L-10 2Z" fill="url(#tg)" stroke="#2e2e2e" stroke-width="1"/></svg><div class="btnrow"><div class="btn" style="left:2px;width:42px;border-radius:2px 0 0 2px"><svg class="abs" style="left:0;top:0" width="42" height="37"><circle cx="21" cy="19.5" r="7.2" fill="#dc6b78"/></svg></div><div class="btn act" style="left:46px;width:42px"><span style="color:#f0a010;-webkit-text-stroke:.5px #f0a010">M</span></div><div class="btn" style="left:90px;width:42px"><span>S</span></div><div class="btn" style="left:134px;width:57px"><svg class="abs" style="left:0;top:0" width="57" height="37" viewBox="-28.5 -18.5 57 37"><g stroke="#b4b4b4" stroke-width="2" fill="#b4b4b4"><path d="M-8.2 -8.6V10.2M0 -9.6V10.2M8.2 -9.2V10.2"/><g stroke="none"><path d="M-8.2 -6.2L-5.2 -2.6L-8.2 1L-11.2 -2.6Z"/><rect x="-10.6" y="-4.2" width="4.8" height="3.2" rx="1"/><path d="M0 -0.2L3.1 3.4L0 7L-3.1 3.4Z"/><rect x="-2.5" y="1.8" width="5" height="3.2" rx="1"/><rect x="5.3" y="-7" width="5.8" height="5" rx="1.2"/></g></g></svg></div><div class="btn" style="left:193px;width:21px;border-radius:0 2px 2px 0"><svg class="abs" style="left:0;top:0" width="21" height="37"><path d="M3.3 14.2H17.7L10.5 26Z" fill="#c4c4c4"/></svg></div></div><div class="dd"><b>Built-in Microphone</b><i><svg width="23" height="32"><path d="M4.5 11.5H18.5L11.5 22.5Z" fill="#bdbdbd"/></svg></i></div></div><div class="track" style="top:649.2px"><div class="tname" style="letter-spacing:-0.1px">Ambience</div><div class="meter"></div><div class="abs" style="left:227.5px;top:78px;width:15px;height:2px;background:#727272"></div><svg class="abs" style="left:6px;top:46px" width="28" height="32" viewBox="6 46 28 32"><path d="M10 56.5H14.5V66H10ZM16 56L24 50.5V72L16 66.5Z" fill="#9c9c9c"/></svg><svg class="abs" style="left:2px;top:88px" width="34" height="28" viewBox="2 88 34 28"><path d="M11 95.5V108.5L3.8 102ZM25.5 95.5V108.5L32 102Z" fill="#8f8f8f"/><rect x="15.2" y="92" width="5.6" height="21" fill="#9c9c9c"/></svg><div class="sline" style="top:59px"></div><div class="sline" style="top:99px"></div><svg class="abs" style="left:170px;top:41px;filter:drop-shadow(0 1.5px 1.5px rgba(0,0,0,.55))" width="28" height="40" viewBox="-14 -20 28 40"><defs><linearGradient id="tg" x1="0" y1="0" x2="0" y2="1"><stop offset="0" stop-color="#f4f4f4"/><stop offset=".5" stop-color="#c8c8c8"/><stop offset="1" stop-color="#8a8a8a"/></linearGradient></defs><path d="M-10 -9.5H10V2L2 11.5H-2L-10 2Z" fill="url(#tg)" stroke="#2e2e2e" stroke-width="1"/></svg><svg class="abs" style="left:114px;top:81px;filter:drop-shadow(0 1.5px 1.5px rgba(0,0,0,.55))" width="28" height="40" viewBox="-14 -20 28 40"><path d="M0 -18V-10M0 10V18" stroke="#9a9a9a" stroke-width="1.4"/><defs><linearGradient id="tg" x1="0" y1="0" x2="0" y2="1"><stop offset="0" stop-color="#f4f4f4"/><stop offset=".5" stop-color="#c8c8c8"/><stop offset="1" stop-color="#8a8a8a"/></linearGradient></defs><path d="M-10 -9.5H10V2L2 11.5H-2L-10 2Z" fill="url(#tg)" stroke="#2e2e2e" stroke-width="1"/></svg><div class="btnrow"><div class="btn" style="left:2px;width:42px;border-radius:2px 0 0 2px"><svg class="abs" style="left:0;top:0" width="42" height="37"><circle cx="21" cy="19.5" r="7.2" fill="#dc6b78"/></svg></div><div class="btn" style="left:46px;width:42px"><span style="">M</span></div><div class="btn" style="left:90px;width:42px"><span>S</span></div><div class="btn" style="left:134px;width:57px"><svg class="abs" style="left:0;top:0" width="57" height="37" viewBox="-28.5 -18.5 57 37"><g stroke="#b4b4b4" stroke-width="2" fill="#b4b4b4"><path d="M-8.2 -8.6V10.2M0 -9.6V10.2M8.2 -9.2V10.2"/><g stroke="none"><path d="M-8.2 -6.2L-5.2 -2.6L-8.2 1L-11.2 -2.6Z"/><rect x="-10.6" y="-4.2" width="4.8" height="3.2" rx="1"/><path d="M0 -0.2L3.1 3.4L0 7L-3.1 3.4Z"/><rect x="-2.5" y="1.8" width="5" height="3.2" rx="1"/><rect x="5.3" y="-7" width="5.8" height="5" rx="1.2"/></g></g></svg></div><div class="btn" style="left:193px;width:21px;border-radius:0 2px 2px 0"><svg class="abs" style="left:0;top:0" width="21" height="37"><path d="M3.3 14.2H17.7L10.5 26Z" fill="#c4c4c4"/></svg></div></div><div class="dd"><b>Built-in Microphone</b><i><svg width="23" height="32"><path d="M4.5 11.5H18.5L11.5 22.5Z" fill="#bdbdbd"/></svg></i></div></div><div class="track" style="top:945.2px"><div class="tname" style="letter-spacing:-0.1px">Music</div><div class="meter"></div><div class="abs" style="left:227.5px;top:78px;width:15px;height:2px;background:#727272"></div><svg class="abs" style="left:6px;top:46px" width="28" height="32" viewBox="6 46 28 32"><path d="M10 56.5H14.5V66H10ZM16 56L24 50.5V72L16 66.5Z" fill="#9c9c9c"/></svg><svg class="abs" style="left:2px;top:88px" width="34" height="28" viewBox="2 88 34 28"><path d="M11 95.5V108.5L3.8 102ZM25.5 95.5V108.5L32 102Z" fill="#8f8f8f"/><rect x="15.2" y="92" width="5.6" height="21" fill="#9c9c9c"/></svg><div class="sline" style="top:59px"></div><div class="sline" style="top:99px"></div><svg class="abs" style="left:170px;top:41px;filter:drop-shadow(0 1.5px 1.5px rgba(0,0,0,.55))" width="28" height="40" viewBox="-14 -20 28 40"><defs><linearGradient id="tg" x1="0" y1="0" x2="0" y2="1"><stop offset="0" stop-color="#f4f4f4"/><stop offset=".5" stop-color="#c8c8c8"/><stop offset="1" stop-color="#8a8a8a"/></linearGradient></defs><path d="M-10 -9.5H10V2L2 11.5H-2L-10 2Z" fill="url(#tg)" stroke="#2e2e2e" stroke-width="1"/></svg><svg class="abs" style="left:114px;top:81px;filter:drop-shadow(0 1.5px 1.5px rgba(0,0,0,.55))" width="28" height="40" viewBox="-14 -20 28 40"><path d="M0 -18V-10M0 10V18" stroke="#9a9a9a" stroke-width="1.4"/><defs><linearGradient id="tg" x1="0" y1="0" x2="0" y2="1"><stop offset="0" stop-color="#f4f4f4"/><stop offset=".5" stop-color="#c8c8c8"/><stop offset="1" stop-color="#8a8a8a"/></linearGradient></defs><path d="M-10 -9.5H10V2L2 11.5H-2L-10 2Z" fill="url(#tg)" stroke="#2e2e2e" stroke-width="1"/></svg><div class="btnrow"><div class="btn" style="left:2px;width:42px;border-radius:2px 0 0 2px"><svg class="abs" style="left:0;top:0" width="42" height="37"><circle cx="21" cy="19.5" r="7.2" fill="#dc6b78"/></svg></div><div class="btn" style="left:46px;width:42px"><span style="">M</span></div><div class="btn" style="left:90px;width:42px"><span>S</span></div><div class="btn" style="left:134px;width:57px"><svg class="abs" style="left:0;top:0" width="57" height="37" viewBox="-28.5 -18.5 57 37"><g stroke="#b4b4b4" stroke-width="2" fill="#b4b4b4"><path d="M-8.2 -8.6V10.2M0 -9.6V10.2M8.2 -9.2V10.2"/><g stroke="none"><path d="M-8.2 -6.2L-5.2 -2.6L-8.2 1L-11.2 -2.6Z"/><rect x="-10.6" y="-4.2" width="4.8" height="3.2" rx="1"/><path d="M0 -0.2L3.1 3.4L0 7L-3.1 3.4Z"/><rect x="-2.5" y="1.8" width="5" height="3.2" rx="1"/><rect x="5.3" y="-7" width="5.8" height="5" rx="1.2"/></g></g></svg></div><div class="btn" style="left:193px;width:21px;border-radius:0 2px 2px 0"><svg class="abs" style="left:0;top:0" width="21" height="37"><path d="M3.3 14.2H17.7L10.5 26Z" fill="#c4c4c4"/></svg></div></div><div class="dd"><b>Built-in Microphone</b><i><svg width="23" height="32"><path d="M4.5 11.5H18.5L11.5 22.5Z" fill="#bdbdbd"/></svg></i></div></div><div class="abs" style="left:0;top:1241px;width:248px;height:2px;background:#2c2c2c"></div></div><div id="lpb" class="abs"></div><div id="playhead" class="abs"></div><div id="fx" class="abs"><h4>Effects</h4><svg class="abs" style="left:214px;top:8px" width="24" height="24" viewBox="0 0 24 24"><path d="M5 5L18 18M18 5L5 18" stroke="#f2f2f2" stroke-width="2.6"/><path d="M2 22.5H22" stroke="#5a5a5a" stroke-width="1.2"/></svg><div class="hr"></div><div class="fxb on" style="top:59px">on</div><div class="fxn" style="top:59px">Voice Profiler</div><div class="fxb off" style="top:99px">off</div><div class="fxn" style="top:99px"></div><div class="fxb off" style="top:139px">off</div><div class="fxn" style="top:139px"></div><div class="fxb off" style="top:179px">off</div><div class="fxn" style="top:179px"></div><div class="fxb off" style="top:219px">off</div><div class="fxn" style="top:219px"></div><div class="fxb off" style="top:259px">off</div><div class="fxn" style="top:259px"></div></div><div id="split" class="abs"></div><div id="rp" class="abs"><div class="ptitle" style="top:0">Clipboard<div class="pbtn" style="left:340px"><svg width="22" height="22" viewBox="0 0 22 22"><path d="M6.5 4H15.5M8 4V11H14V4M5 11.5H17M11 12V19" stroke="#f4f4f4" stroke-width="2" fill="none"/></svg></div><div class="pbtn" style="left:370px"><svg width="22" height="22" viewBox="0 0 22 22"><path d="M5 5L17 17M17 5L5 17" stroke="#f4f4f4" stroke-width="2.2"/></svg></div></div><div class="gh" style="top:32.5px"><i>Alt+1</i><b>Group 1</b></div><div class="gb" style="top:69.5px;height:152.5px;background:#474747"></div><div class="gh" style="top:223.3px"><i>Alt+2</i><b>Group 2</b></div><div class="gb" style="top:260.3px;height:152.5px;background:#242625"></div><div class="gh" style="top:413.8px"><i>Alt+3</i><b>Group 3</b></div><div class="gb" style="top:450.8px;height:152.5px;background:#474747"></div><div class="gh" style="top:604.0px"><i>Alt+4</i><b>Group 4</b></div><div class="gb" style="top:641.0px;height:146.0px;background:#242625"></div><div class="abs" style="left:0;top:788px;width:384px;height:2.5px;background:#151515"></div><div class="abs" style="left:0;top:790.5px;width:384px;height:8px;background:#3b3b3b"></div><div class="ptitle" style="top:798px">Markers<div class="pbtn" style="left:340px"><svg width="22" height="22" viewBox="0 0 22 22"><path d="M6.5 4H15.5M8 4V11H14V4M5 11.5H17M11 12V19" stroke="#f4f4f4" stroke-width="2" fill="none"/></svg></div><div class="pbtn" style="left:370px"><svg width="22" height="22" viewBox="0 0 22 22"><path d="M5 5L17 17M17 5L5 17" stroke="#f4f4f4" stroke-width="2.2"/></svg></div></div><div class="abs" style="left:0;top:830px;width:384px;height:651px;background:#2f2f2f"></div><div class="mrow" style="top:831px;background:linear-gradient(#8e8e8e,#6c6c6c 50%,#585858)"><svg class="abs" style="left:17px;top:15px" width="16" height="16"><path d="M1 2H15L8 14.5Z" fill="#e6e6e6"/></svg><span style="left:66px">1</span><span style="left:90px">In</span><span style="left:344px">0:00</span></div><div class="mrow" style="top:874px;border-bottom:2px solid #6a6a6a"><svg class="abs" style="left:17px;top:15px" width="16" height="16"><path d="M1 2H15L8 14.5Z" fill="#e6e6e6"/></svg><span style="left:66px">2</span><span style="left:90px">Out</span><span style="left:344px">0:26</span></div></div><div id="topstrip" class="abs"></div><div id="toolbar" class="abs"><div class="tlabel" style="left:51.25px">New</div><div class="tlabel" style="left:126px">Open</div><div class="tlabel" style="left:203px">Save</div><div class="tlabel" style="left:280px">Import</div><div class="tlabel" style="left:362.5px">Export</div><div class="tlabel" style="left:446.25px">Publish</div><div class="tlabel dis" style="left:546px">Cut</div><div class="tlabel dis" style="left:623px">Copy</div><div class="tlabel" style="left:698.8px">Paste</div><div class="tlabel" style="left:773.7px">Insert</div><div class="tlabel dis" style="left:849px">Clear</div><div class="tlabel" style="left:925px">Split</div><div class="tlabel" style="left:1019px">Undo</div><div class="tlabel dis" style="left:1097px">Redo</div><div class="tlabel" style="left:1191px">Out</div><div class="tlabel" style="left:1267px">In</div><div class="tlabel" style="left:1359.7px">Help</div><div class="tsep" style="left:496px"></div><div class="tsep" style="left:970px"></div><div class="tsep" style="left:1140px"></div><div class="tsep" style="left:1309.5px"></div></div><svg class="abs" style="left:0;top:0" width="1500" height="100" viewBox="0 0 1500 100" fill="none" stroke-linejoin="miter"><path d="M35.2 21.3H52L58.8 28.2V48.7H35.2Z" stroke="#19a6ff" stroke-width="2.3"/><path d="M51 20.5L59.5 29H51Z" fill="#19a6ff"/><path d="M109.2 47V23.2L133 25.6V33" stroke="#ffa00f" stroke-width="2.4"/><path d="M109.5 47L114.3 33.2H138L132.5 47Z" stroke="#ffa00f" stroke-width="2.4"/><rect x="187.2" y="21.2" width="25.6" height="25.6" stroke="#19a6ff" stroke-width="2.3"/><rect x="192" y="21" width="16" height="10.5" fill="#19a6ff"/><rect x="193.5" y="38" width="12.5" height="9" fill="#19a6ff"/><rect x="196" y="42" width="2.6" height="4.2" fill="#222"/><rect x="265.2" y="21.2" width="25.6" height="25.6" stroke="#19a6ff" stroke-width="2.3"/><path d="M266.80 32.0h1.48v4.0h-1.48zM268.23 30.0h1.48v8.0h-1.48zM269.65 28.0h1.48v12.0h-1.48zM271.07 30.0h1.48v8.0h-1.48zM272.50 26.5h1.48v15.0h-1.48zM273.93 29.0h1.48v10.0h-1.48zM275.35 25.0h1.48v18.0h-1.48zM276.78 29.0h1.48v10.0h-1.48zM278.20 27.0h1.48v14.0h-1.48zM279.62 29.5h1.48v9.0h-1.48zM281.05 26.0h1.48v16.0h-1.48zM282.48 29.0h1.48v10.0h-1.48zM283.90 27.5h1.48v13.0h-1.48zM285.33 30.0h1.48v8.0h-1.48zM286.75 31.0h1.48v6.0h-1.48zM288.18 32.5h1.48v3.0h-1.48z" fill="#ffa00f"/><path d="M366.5 35V27.5L359.5 19.3H345.2V46.7H366" stroke="#ffa00f" stroke-width="2.3"/><path d="M359 19L367.5 28H359Z" fill="#ffa00f"/><path d="M353.8 35.4H365.6V29.8L375.8 38.8L365.6 48V42.6H353.8Z" fill="#19a6ff"/><circle cx="443.7" cy="33.8" r="14.9" stroke="#19a6ff" stroke-width="2.4"/><path d="M433 27.5l3-3.5 4.5-2.5 4 .5-1.5 3-3.5 1-1.5 3-3 .5zM434.5 33l5-1 5 2 2 3.5-2.5 3-2 5-2.5 1-1.5-5-3-3.5zM449.5 21.5l4 2.5 3.5 5 .5 6-2.5 4-3-2-1-4-3-2.5 1.5-4z" fill="#19a6ff"/><circle cx="532.8" cy="24.8" r="3.9" stroke="#858585" stroke-width="2"/><circle cx="532.8" cy="41" r="3.9" stroke="#858585" stroke-width="2"/><path d="M536 27L556.5 40.5M536 38.8L556 25.5" stroke="#858585" stroke-width="3"/><path d="M617 39.5H606.8V21.2H617L621 25.5V29" stroke="#858585" stroke-width="2.2"/><path d="M617.2 29.2H628L632.8 34V46.8H617.2Z" stroke="#858585" stroke-width="2.2"/><path d="M616.5 21v5h5M627.5 29v5.5h5.5" stroke="#858585" stroke-width="1.6"/><path d="M694 42.8H681.2V22.2H704.8V28.5" stroke="#ffa00f" stroke-width="2.4"/><path d="M687.2 25.2V19H698.8V25.2M686 24.2H690.6M695.4 24.2H700" stroke="#ffa00f" stroke-width="2.3"/><path d="M695.2 29.3H705.3L710.8 34.8V46.7H695.2Z" stroke="#19a6ff" stroke-width="2.4"/><path d="M704.6 29.6V35.4H710.4" stroke="#19a6ff" stroke-width="2"/><path d="M760 42.8H757V22.2H780.5V42.8H778" stroke="#ffa00f" stroke-width="2.4"/><path d="M763 25.2V19H774.6V25.2M761.8 24.2H766.4M771.2 24.2H775.8" stroke="#ffa00f" stroke-width="2.3"/><path d="M761.2 29.3H771.3L776.8 34.8V46.7H761.2Z" stroke="#19a6ff" stroke-width="2.4"/><path d="M770.6 29.6V35.4H776.4" stroke="#19a6ff" stroke-width="2"/><path d="M782 45h6M785 42v6" stroke="#19a6ff" stroke-width="2"/><path d="M846.5 30V26L842 21.2H833.2V39H842" stroke="#858585" stroke-width="2.2"/><path d="M841.5 21v5.5h5" stroke="#858585" stroke-width="1.6"/><path d="M838.5 25.5L862.5 48" stroke="#858585" stroke-width="3"/><path d="M862.5 23.5L846 38.5" stroke="#858585" stroke-width="3"/><path d="M848 36L838 46.5" stroke="#858585" stroke-width="5"/><rect x="908.8" y="20.6" width="30.4" height="24.4" stroke="#19a6ff" stroke-width="2.4"/><path d="M923.8 19.4V46.4" stroke="#ffa00f" stroke-width="3.6" stroke-dasharray="2.6 1.3"/><path d="M1012 44.6L1024.5 39.2C1030 36.5 1030.5 29 1026 26.3C1022 24 1017 26 1011 28.8" stroke="#19a6ff" stroke-width="4.7"/><path d="M1003.9 31.3L1008.8 23.6L1013.2 34.6Z" fill="#19a6ff"/><path d="M1098 44.6L1085.5 39.2C1080 36.5 1079.5 29 1084 26.3C1088 24 1093 26 1099 28.8" stroke="#858585" stroke-width="4.7"/><path d="M1106.1 31.3L1101.2 23.6L1096.8 34.6Z" fill="#858585"/><circle cx="1181.8" cy="30.3" r="7.9" stroke="#ffa00f" stroke-width="4.2"/><path d="M1188.5 36L1203 45" stroke="#ffa00f" stroke-width="4.4" stroke-linecap="round"/><path d="M1192 23H1202" stroke="#ddd" stroke-width="1.6"/><circle cx="1257.5" cy="32" r="7.9" stroke="#ffa00f" stroke-width="4.2"/><path d="M1264.5 38L1279 47" stroke="#ffa00f" stroke-width="4.4" stroke-linecap="round"/><path d="M1268 25H1278M1273 20V30" stroke="#ddd" stroke-width="1.6"/><rect x="1345.3" y="21.3" width="25.4" height="25.4" rx="3" stroke="#ffa00f" stroke-width="2.8"/><text x="1358" y="42.5" text-anchor="middle" font-family="Liberation Sans, sans-serif" font-weight="bold" font-size="23" fill="#e8e8e8" stroke="none">?</text></svg><div class="menu" style="left:762px;top:650px;width:405.5px;height:851.5px;background:linear-gradient(#d1d1d0 0%,#d0d0cf 60%,#cdd0d0 68%,#bcc5c7 76%,#aab8bb 84%,#a3b2b6 92%,#a0b0b4 100%)"><div class="mi" style="top:7.2px"><span style="left:43.4px;letter-spacing:0.63px">AUBandpass</span></div><div class="mi" style="top:45.2px"><span style="left:43.4px;letter-spacing:0.37px">AUDelay</span></div><div class="mi" style="top:83.2px"><span style="left:43.4px;letter-spacing:1.01px">AUDistortion</span></div><div class="mi" style="top:121.2px"><span style="left:43.4px;letter-spacing:0.86px">AUDynamicsProcessor</span></div><div class="mi" style="top:159.2px"><span style="left:43.4px;letter-spacing:0.5px">AUFilter</span></div><div class="mi" style="top:197.2px"><span style="left:43.4px;letter-spacing:0.47px">AUGraphicEQ</span></div><div class="mi" style="top:235.2px"><span style="left:43.4px;letter-spacing:0.83px">AUHighShelfFilter</span></div><div class="mi" style="top:273.2px"><span style="left:43.4px;letter-spacing:0.59px">AUHipass</span></div><div class="mi" style="top:311.2px"><span style="left:43.4px;letter-spacing:0.6px">AULowpass</span></div><div class="mi" style="top:349.2px"><span style="left:43.4px;letter-spacing:0.75px">AULowShelfFilter</span></div><div class="mi" style="top:387.2px"><span style="left:43.4px;letter-spacing:0.73px">AUMatrixReverb</span></div><div class="mi" style="top:425.2px"><span style="left:43.4px;letter-spacing:1.06px">AUMultibandCompressor</span></div><div class="mi" style="top:463.2px"><span style="left:43.4px;letter-spacing:0.28px">AUNBandEQ</span></div><div class="mi" style="top:501.2px"><span style="left:43.4px;letter-spacing:0.72px">AUNetSend</span></div><div class="mi" style="top:539.2px"><span style="left:43.4px;letter-spacing:0.87px">AUNewPitch</span></div><div class="mi" style="top:577.2px"><span style="left:43.4px;letter-spacing:0.54px">AUParametricEQ</span></div><div class="mi" style="top:615.2px"><span style="left:43.4px;letter-spacing:0.7px">AUPeakLimiter</span></div><div class="mi" style="top:653.2px"><span style="left:43.4px;letter-spacing:0.66px">AUPitch</span></div><div class="mi" style="top:691.2px"><span style="left:43.4px;letter-spacing:0.49px">AUReverb2</span></div><div class="mi" style="top:729.2px"><span style="left:43.4px;letter-spacing:0.57px">AURogerBeep</span></div><div class="mi" style="top:767.2px"><span style="left:43.4px;letter-spacing:0.49px">AURoundTripAAC</span></div><div class="mi" style="top:805.2px"><span style="left:43.4px;letter-spacing:0.58px">AUSampleDelay</span></div></div><div class="menu" style="left:469.8px;top:435.5px;width:292.2px;height:268.0px;background:linear-gradient(#c9ced4 0%,#cdd1d5 12%,#d2d3d4 30%,#d3d3d3 100%)"><div class="mi" style="top:7.7px"><span style="left:41.9px;letter-spacing:0.36px">Equalizer</span></div><div class="mi" style="top:45.7px"><span style="left:41.9px;letter-spacing:0.89px">Compressor</span></div><div class="mi" style="top:83.7px"><span style="left:41.9px;letter-spacing:0.86px">Loudness Meter</span></div><div class="mi" style="top:121.7px"><span style="left:41.9px;letter-spacing:0.74px">Noise Reduction</span></div><div class="mi" style="top:159.7px"><span style="left:41.9px;letter-spacing:0.74px">BBC Meter</span></div><div class="abs" style="left:0;right:0;top:209.5px;height:2px;background:#c3c3c3;box-shadow:0 1px 0 #dcdcdc"></div><div class="mi hl" style="top:222.3px;height:37.5px"><span style="left:41.9px;letter-spacing:.8px">Apple</span><svg class="abs" style="left:249.7px;top:9.5px" width="20" height="20"><path d="M1 1.5L17.5 9.8L1 18Z" fill="#fff"/></svg></div></div></body></html>
